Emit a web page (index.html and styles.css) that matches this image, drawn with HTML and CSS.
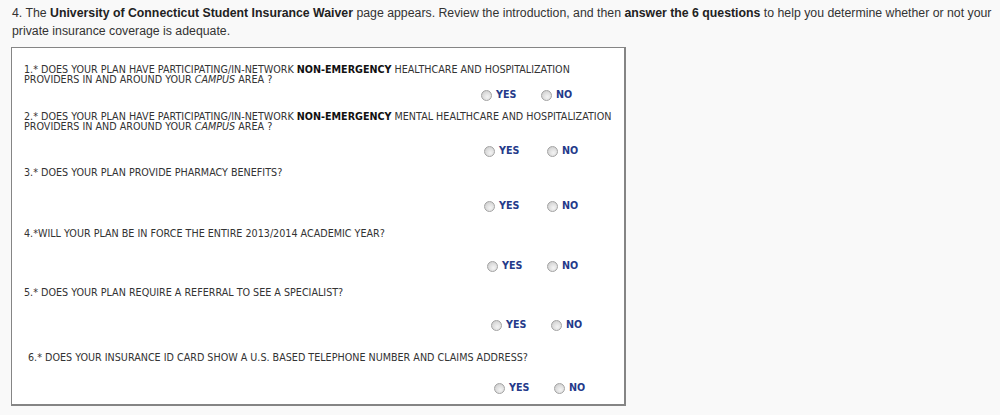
FILE: index.html
```html
<!DOCTYPE html>
<html lang="en">
<head>
    <meta charset="UTF-8">
    <title>Student Insurance Waiver</title>
    <link rel="stylesheet" href="styles.css">
</head>
<body>

<!-- Intro -->
<p class="intro">
    4. The <strong>University of Connecticut Student Insurance Waiver</strong> page appears. Review the introduction, and then <strong>answer the 6 questions</strong> to help you determine whether or not your private insurance coverage is adequate.
</p>

<!-- Waiver Questions -->
<div class="waiver-box">
    <div class="question q1">
        <div class="question-text">1.* DOES YOUR PLAN HAVE PARTICIPATING/IN-NETWORK <b>NON-EMERGENCY</b> HEALTHCARE AND HOSPITALIZATION<br>PROVIDERS IN AND AROUND YOUR <i>CAMPUS</i> AREA ?</div>
        <div class="answers">
            <label class="option yes"><span class="radio"></span>YES</label>
            <label class="option"><span class="radio"></span>NO</label>
        </div>
    </div>

    <div class="question q2">
        <div class="question-text">2.* DOES YOUR PLAN HAVE PARTICIPATING/IN-NETWORK <b>NON-EMERGENCY</b> MENTAL HEALTHCARE AND HOSPITALIZATION<br>PROVIDERS IN AND AROUND YOUR <i>CAMPUS</i> AREA ?</div>
        <div class="answers">
            <label class="option yes wide"><span class="radio"></span>YES</label>
            <label class="option"><span class="radio"></span>NO</label>
        </div>
    </div>

    <div class="question q3">
        <div class="question-text">3.* DOES YOUR PLAN PROVIDE PHARMACY BENEFITS?</div>
        <div class="answers">
            <label class="option yes wide"><span class="radio"></span>YES</label>
            <label class="option"><span class="radio"></span>NO</label>
        </div>
    </div>

    <div class="question q4">
        <div class="question-text">4.*WILL YOUR PLAN BE IN FORCE THE ENTIRE 2013/2014 ACADEMIC YEAR?</div>
        <div class="answers">
            <label class="option yes"><span class="radio"></span>YES</label>
            <label class="option"><span class="radio"></span>NO</label>
        </div>
    </div>

    <div class="question q5">
        <div class="question-text">5.* DOES YOUR PLAN REQUIRE A REFERRAL TO SEE A SPECIALIST?</div>
        <div class="answers">
            <label class="option yes"><span class="radio"></span>YES</label>
            <label class="option"><span class="radio"></span>NO</label>
        </div>
    </div>

    <div class="question q6">
        <div class="question-text">6.* DOES YOUR INSURANCE ID CARD SHOW A U.S. BASED TELEPHONE NUMBER AND CLAIMS ADDRESS?</div>
        <div class="answers">
            <label class="option yes"><span class="radio"></span>YES</label>
            <label class="option"><span class="radio"></span>NO</label>
        </div>
    </div>
</div>

</body>
</html>
```

FILE: styles.css
```css
body {
    margin: 0;
    padding: 4px 2px 0 12px;
    background-color: #f9f9f9;
    font-family: "Liberation Sans", Arial, sans-serif;
    color: #333;
}

/* Intro text */
.intro {
    margin: 0;
    font-size: 12.3px;
    line-height: 18px;
}

.intro strong {
    color: #222;
}

/* Question box */
.waiver-box {
    margin: 7px 0 0 -1px;
    width: 600px;
    background: #fff;
    border: 1px solid #858585;
    border-width: 1px 2px 2px 1px;
    padding: 17px 0 10px 12px;
    font-family: "DejaVu Sans", Verdana, sans-serif;
    font-size: 9.6px;
}

.question-text {
    line-height: 10px;
    color: #333;
    white-space: nowrap;
}

.question-text b {
    color: #111;
}

.answers {
    display: flex;
    align-items: center;
    height: 12px;
}

.option {
    display: flex;
    align-items: center;
    font-weight: bold;
    color: #243a8a;
    line-height: 12px;
}

.option.yes {
    width: 60px;
}

.option.yes.wide {
    width: 63px;
}

.radio {
    width: 9px;
    height: 9px;
    border: 1px solid #a3a3a3;
    border-radius: 50%;
    background: radial-gradient(circle at 60% 65%, #f4f4f4 0%, #dcdcdc 55%, #c4c4c4 100%);
    margin-right: 4px;
}

/* Spacing per question, follows the original page */
.q1 .answers { margin-top: 4px; padding-left: 457px; }
.q2 { margin-top: 11px; }
.q2 .answers { margin-top: 13px; padding-left: 460px; }
.q3 { margin-top: 11px; }
.q3 .answers { margin-top: 22px; padding-left: 460px; }
.q4 { margin-top: 17px; }
.q4 .answers { margin-top: 21px; padding-left: 463px; }
.q5 { margin-top: 16px; }
.q5 .answers { margin-top: 21px; padding-left: 467px; }
.q6 { margin-top: 22px; }
.q6 .question-text { padding-left: 4px; }
.q6 .answers { margin-top: 19px; padding-left: 470px; }
```
